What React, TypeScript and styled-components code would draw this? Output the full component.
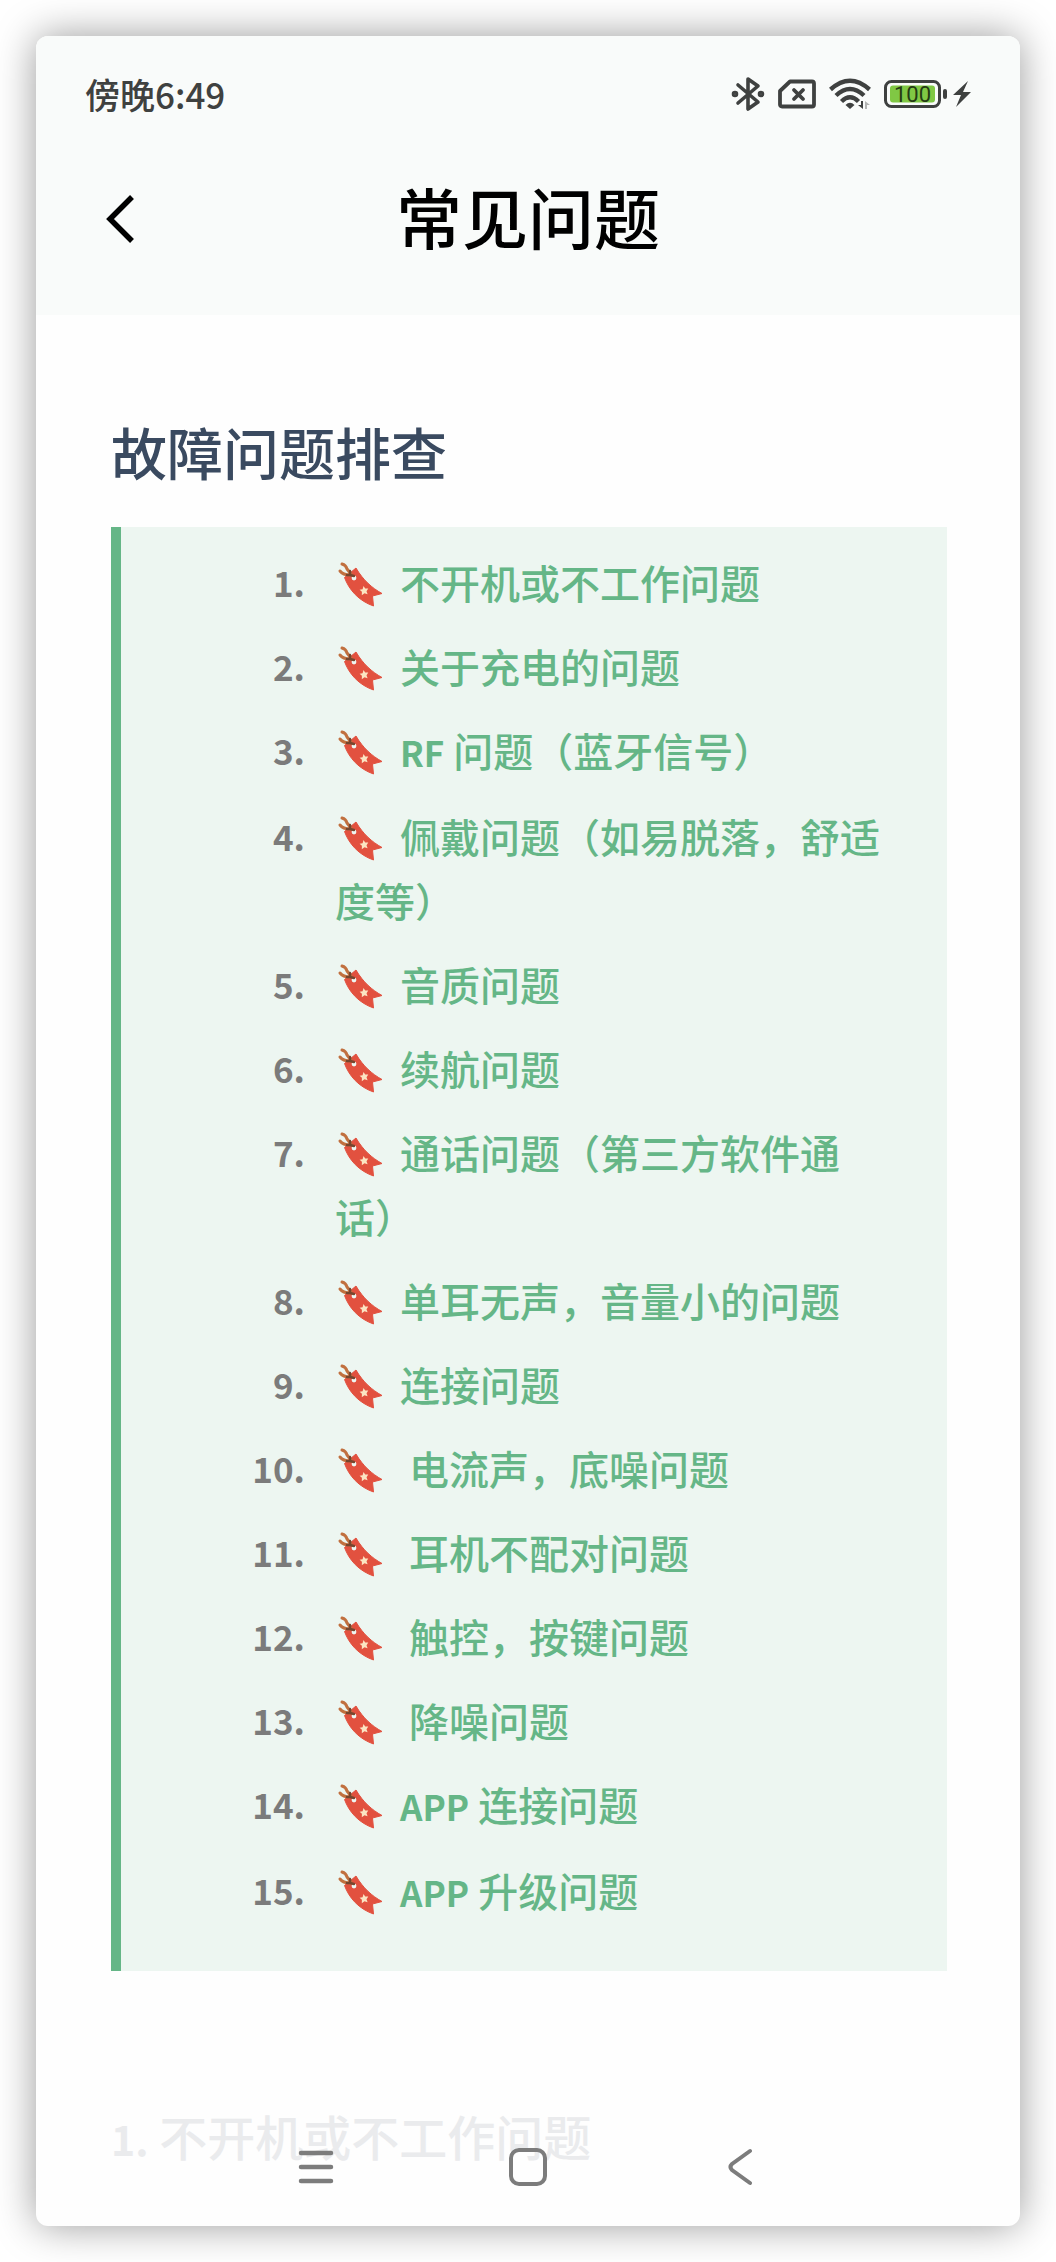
import React from "react";
import styled, { createGlobalStyle } from "styled-components";

const Global = createGlobalStyle`
  *, *::before, *::after { box-sizing: border-box; }
  body { margin: 0; background: #fff; font-family: "Noto Sans CJK SC", "Noto Sans", sans-serif; text-spacing-trim: space-all; }
  button { border: 0; padding: 0; background: none; cursor: pointer; display: flex; align-items: center; justify-content: center; }
  svg { display: block; }
`;

const Page = styled.div`
  min-height: 100vh;
  padding: 36px;
  display: flex;
  overflow: hidden;
`;

const Phone = styled.div`
  flex: 1;
  min-width: 0;
  display: flex;
  flex-direction: column;
  border-radius: 12px;
  overflow: hidden;
  background: #fefefe;
  box-shadow: 0 0 40px rgba(0, 0, 0, 0.4);
`;

const Top = styled.header`
  background: #f9fbfa;
`;

const StatusBar = styled.div`
  height: 115px;
  padding: 0 48px 0 49px;
  display: flex;
  align-items: center;
  justify-content: space-between;
  color: #3f4140;
`;

const Clock = styled.time`
  font-size: 35px;
  line-height: 48px;
  font-weight: 500;
`;

const StatusIcons = styled.div`
  display: flex;
  align-items: center;
  gap: 13px;
`;

const TitleBar = styled.div`
  height: 164px;
  padding: 0 64px;
  display: grid;
  grid-template-columns: 40px 1fr 40px;
  align-items: start;
`;

const BackButton = styled.button`
  width: 40px;
  height: 136px;
`;

const Title = styled.h1`
  margin: 0;
  text-align: center;
  font-size: 66px;
  line-height: 128px;
  font-weight: 500;
  color: #000;
`;

const Content = styled.main`
  flex: 1;
  padding: 88px 73px 0 75px;
`;

const Heading = styled.h2`
  margin: 0 0 28px;
  font-size: 56px;
  line-height: 96px;
  font-weight: 500;
  color: #3a4a60;
`;

const Toc = styled.ol`
  list-style: none;
  margin: 0;
  padding: 23px 46px 47px 92px;
  border-left: 10px solid #65b687;
  background: #edf6f1;
  display: flex;
  flex-direction: column;
  gap: 20px;
`;

const TocItem = styled.li`
  display: grid;
  grid-template-columns: 92px 1fr;
  column-gap: 30px;
  line-height: 64px;
`;

const Num = styled.span`
  text-align: right;
  font-size: 35px;
  font-weight: 600;
  color: #7b7b7b;
`;

const TocLink = styled.a`
  font-size: 40px;
  font-weight: 500;
  color: #65b687;
  text-decoration: none;
  white-space: pre-wrap;
`;

const Latin = styled.span`
  font-size: 35px;
  font-weight: 600;
`;

const Mark = styled.svg`
  display: inline-block;
  width: 48px;
  height: 48px;
  margin-right: 8px;
  vertical-align: -9px;
`;

const NextHeading = styled.h3`
  margin: 132px 0 0;
  font-size: 48px;
  line-height: 64px;
  font-weight: 500;
  color: #eaebed;
`;

const NextNum = styled.span`
  font-size: 41px;
  line-height: 1;
  font-weight: 600;
`;

const NavBar = styled.nav`
  height: 60px;
  margin: -32px 0 29px;
  display: flex;
  justify-content: center;
  gap: 152px;
`;

const NavButton = styled.button`
  width: 60px;
  height: 60px;
`;

const Bookmark = () => (
  <Mark viewBox="0 0 48 48" aria-hidden="true">
    <path d="M21 8C28 20 37 28 47 33.500L37.500 36 38.500 46C24 41 14 30 9.500 17.500Z" fill="#e2513f" stroke="#e2513f" strokeLinejoin="round" />
    <circle cx="19" cy="18" r="2.4" fill="#edf6f1" />
    <path d="M7 4Q11 5 12 9L16 14M5 11Q8 15 15 15" fill="none" stroke="#c1703f" strokeWidth="3" strokeLinecap="round" />
    <path d="M12 15Q16 16 15 11M15 15L19 16" fill="none" stroke="#75462f" strokeWidth="2.4" strokeLinecap="round" />
    <path d="M28.500 26L30.200 28.600 33.300 28.500 31.500 31.200 32.600 34.200 29.500 33.200 26.800 35.200 26.900 31.800 24.600 29.800 27.600 29.200Z" fill="#fbe5c3" />
  </Mark>
);

const items: { latin?: string; text: string }[] = [
  { text: "不开机或不工作问题" },
  { text: "关于充电的问题" },
  { latin: "RF", text: " 问题（蓝牙信号）" },
  { text: "佩戴问题（如易脱落，舒适度等）" },
  { text: "音质问题" },
  { text: "续航问题" },
  { text: "通话问题（第三方软件通话）" },
  { text: "单耳无声，音量小的问题" },
  { text: "连接问题" },
  { text: " 电流声，底噪问题" },
  { text: " 耳机不配对问题" },
  { text: " 触控，按键问题" },
  { text: " 降噪问题" },
  { latin: "APP", text: " 连接问题" },
  { latin: "APP", text: " 升级问题" },
];

const StatusGlyphs = () => (
  <StatusIcons>
    <svg width="34" height="36" viewBox="0 0 34 36" fill="none" stroke="#3f4140" strokeWidth="3.600" strokeLinejoin="round" strokeLinecap="round">
      <path d="M7 9L27 26 17 33V3L27 10 7 27" />
      <circle cx="4" cy="18" r="1.500" />
      <circle cx="30" cy="18" r="1.500" />
    </svg>
    <svg width="38" height="30" viewBox="0 0 38 30" fill="none" stroke="#3f4140" strokeWidth="3.800" strokeLinejoin="round" strokeLinecap="round">
      <path d="M12 2.500H34Q36 2.500 36 4.500V25.500Q36 27.500 34 27.500H4Q2 27.500 2 25.500V12Z" />
      <path d="M16 11L25 20M25 11L16 20" />
    </svg>
    <svg width="42" height="34" viewBox="0 0 42 34" fill="none" stroke="#3f4140" strokeWidth="4.400">
      <path d="M1.500 12.500Q21-5 40.500 12.500M7 18.500Q21 5.500 35 18.500M12.500 24.500Q21 16 29.500 24.500" />
      <path d="M16.500 28Q21 23.500 25.500 28L21 32Z" fill="#3f4140" stroke="none" />
      <path d="M34 24V32L29 28H32V24Z" fill="#3f4140" stroke="none" />
      <path d="M36 32V24L41 28H38V32Z" fill="#b3b5b4" stroke="none" />
    </svg>
    <svg width="88" height="28" viewBox="0 0 88 28">
      <rect x="1.500" y="1.500" width="54" height="25" rx="6" fill="none" stroke="#3f4140" strokeWidth="3" />
      <rect x="6" y="5.500" width="45" height="17" rx="3" fill="#80c844" />
      <text x="28.500" y="22" textAnchor="middle" fontFamily="Roboto, sans-serif" fontSize="22" fill="#243b14">100</text>
      <rect x="59" y="9" width="4" height="10" rx="2" fill="#3f4140" />
      <path d="M84 1L69 15H77L72 27 87 12H79Z" fill="#3f4140" />
    </svg>
  </StatusIcons>
);

export default function App() {
  return (
    <>
      <Global />
      <Page>
        <Phone>
          <Top>
            <StatusBar>
              <Clock dateTime="18:49">傍晚6:49</Clock>
              <StatusGlyphs />
            </StatusBar>
            <TitleBar>
              <BackButton aria-label="返回">
                <svg width="30" height="50" viewBox="0 0 30 50" fill="none" stroke="#000" strokeWidth="5.500">
                  <path d="M27 3L5 25 27 47" />
                </svg>
              </BackButton>
              <Title>常见问题</Title>
            </TitleBar>
          </Top>
          <Content>
            <Heading>故障问题排查</Heading>
            <Toc>
              {items.map((item, i) => (
                <TocItem key={i}>
                  <Num>{i + 1}.</Num>
                  <TocLink href={`#q${i + 1}`}>
                    <Bookmark />
                    {" "}
                    {item.latin && <Latin>{item.latin}</Latin>}
                    {item.text}
                  </TocLink>
                </TocItem>
              ))}
            </Toc>
            <NextHeading id="q1">
              <NextNum>1.</NextNum> 不开机或不工作问题
            </NextHeading>
          </Content>
          <NavBar aria-label="系统导航">
            <NavButton aria-label="菜单">
              <svg width="36" height="36" viewBox="0 0 36 36" stroke="#7c7c7c" strokeWidth="4.500" strokeLinecap="round">
                <path d="M3 4H33M3 18H33M3 32H33" />
              </svg>
            </NavButton>
            <NavButton aria-label="主页">
              <svg width="38" height="38" viewBox="0 0 38 38" fill="none" stroke="#7c7c7c" strokeWidth="4">
                <rect x="2" y="2" width="34" height="34" rx="8" />
              </svg>
            </NavButton>
            <NavButton aria-label="后退">
              <svg width="26" height="38" viewBox="0 0 26 38" fill="none" stroke="#7c7c7c" strokeWidth="4" strokeLinecap="round">
                <path d="M23 3L5 16Q2 19 5 22L23 35" />
              </svg>
            </NavButton>
          </NavBar>
        </Phone>
      </Page>
    </>
  );
}
